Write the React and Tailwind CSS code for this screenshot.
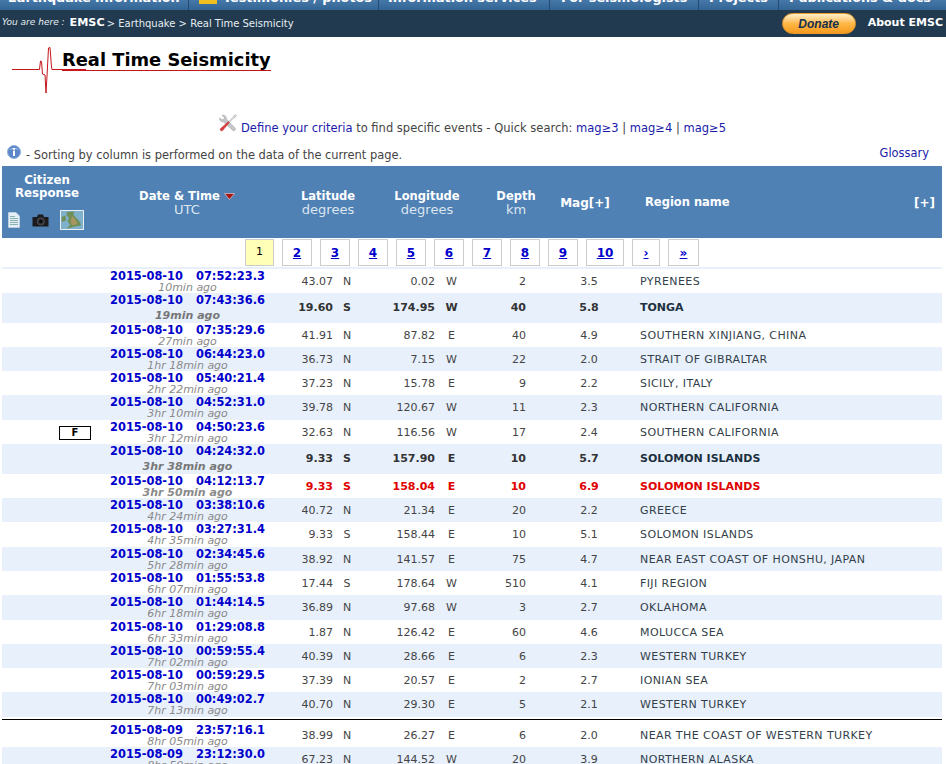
const navItems = [
  { label: 'Earthquake information', w: 'w-[189px]', pl: 'pl-[8px]' },
  { label: 'Testimonies / photos', w: 'w-[190px]', pl: 'pl-[10px]', icon: true },
  { label: 'Information services', w: 'w-[171px]', pl: 'pl-[9px]' },
  { label: 'For seismologists', w: 'w-[149px]', pl: 'pl-[11px]' },
  { label: 'Projects', w: 'w-[80px]', pl: 'pl-[10px]' },
  { label: 'Publications & docs', w: 'w-[160px]', pl: 'pl-[10px]' },
];

const pages = ['2', '3', '4', '5', '6', '7', '8', '9'];

const rowGrid = 'grid grid-cols-[106px_159px_66px_28px_74px_33px_58px_114px_1fr] items-center';

const rows = [
  { date: '2015-08-10', time: '07:52:23.3', ago: '10min ago', lat: '43.07', ns: 'N', lon: '0.02', ew: 'W', depth: '2', mag: '3.5', region: 'PYRENEES', h: 'h-[24px]' },
  { date: '2015-08-10', time: '07:43:36.6', ago: '19min ago', lat: '19.60', ns: 'S', lon: '174.95', ew: 'W', depth: '40', mag: '5.8', region: 'TONGA', h: 'h-[30px]', bold: true, gap: true },
  { date: '2015-08-10', time: '07:35:29.6', ago: '27min ago', lat: '41.91', ns: 'N', lon: '87.82', ew: 'E', depth: '40', mag: '4.9', region: 'SOUTHERN XINJIANG, CHINA', h: 'h-[24px]' },
  { date: '2015-08-10', time: '06:44:23.0', ago: '1hr 18min ago', lat: '36.73', ns: 'N', lon: '7.15', ew: 'W', depth: '22', mag: '2.0', region: 'STRAIT OF GIBRALTAR', h: 'h-[24px]' },
  { date: '2015-08-10', time: '05:40:21.4', ago: '2hr 22min ago', lat: '37.23', ns: 'N', lon: '15.78', ew: 'E', depth: '9', mag: '2.2', region: 'SICILY, ITALY', h: 'h-[24px]' },
  { date: '2015-08-10', time: '04:52:31.0', ago: '3hr 10min ago', lat: '39.78', ns: 'N', lon: '120.67', ew: 'W', depth: '11', mag: '2.3', region: 'NORTHERN CALIFORNIA', h: 'h-[25px]' },
  { date: '2015-08-10', time: '04:50:23.6', ago: '3hr 12min ago', lat: '32.63', ns: 'N', lon: '116.56', ew: 'W', depth: '17', mag: '2.4', region: 'SOUTHERN CALIFORNIA', h: 'h-[24px]', felt: true },
  { date: '2015-08-10', time: '04:24:32.0', ago: '3hr 38min ago', lat: '9.33', ns: 'S', lon: '157.90', ew: 'E', depth: '10', mag: '5.7', region: 'SOLOMON ISLANDS', h: 'h-[30px]', bold: true, gap: true },
  { date: '2015-08-10', time: '04:12:13.7', ago: '3hr 50min ago', lat: '9.33', ns: 'S', lon: '158.04', ew: 'E', depth: '10', mag: '6.9', region: 'SOLOMON ISLANDS', h: 'h-[24px]', bold: true, red: true },
  { date: '2015-08-10', time: '03:38:10.6', ago: '4hr 24min ago', lat: '40.72', ns: 'N', lon: '21.34', ew: 'E', depth: '20', mag: '2.2', region: 'GREECE', h: 'h-[24px]' },
  { date: '2015-08-10', time: '03:27:31.4', ago: '4hr 35min ago', lat: '9.33', ns: 'S', lon: '158.44', ew: 'E', depth: '10', mag: '5.1', region: 'SOLOMON ISLANDS', h: 'h-[25px]' },
  { date: '2015-08-10', time: '02:34:45.6', ago: '5hr 28min ago', lat: '38.92', ns: 'N', lon: '141.57', ew: 'E', depth: '75', mag: '4.7', region: 'NEAR EAST COAST OF HONSHU, JAPAN', h: 'h-[24px]' },
  { date: '2015-08-10', time: '01:55:53.8', ago: '6hr 07min ago', lat: '17.44', ns: 'S', lon: '178.64', ew: 'W', depth: '510', mag: '4.1', region: 'FIJI REGION', h: 'h-[24px]' },
  { date: '2015-08-10', time: '01:44:14.5', ago: '6hr 18min ago', lat: '36.89', ns: 'N', lon: '97.68', ew: 'W', depth: '3', mag: '2.7', region: 'OKLAHOMA', h: 'h-[25px]' },
  { date: '2015-08-10', time: '01:29:08.8', ago: '6hr 33min ago', lat: '1.87', ns: 'N', lon: '126.42', ew: 'E', depth: '60', mag: '4.6', region: 'MOLUCCA SEA', h: 'h-[24px]' },
  { date: '2015-08-10', time: '00:59:55.4', ago: '7hr 02min ago', lat: '40.39', ns: 'N', lon: '28.66', ew: 'E', depth: '6', mag: '2.3', region: 'WESTERN TURKEY', h: 'h-[24px]' },
  { date: '2015-08-10', time: '00:59:29.5', ago: '7hr 03min ago', lat: '37.39', ns: 'N', lon: '20.57', ew: 'E', depth: '2', mag: '2.7', region: 'IONIAN SEA', h: 'h-[24px]' },
  { date: '2015-08-10', time: '00:49:02.7', ago: '7hr 13min ago', lat: '40.70', ns: 'N', lon: '29.30', ew: 'E', depth: '5', mag: '2.1', region: 'WESTERN TURKEY', h: 'h-[25px]' },
  { divider: true },
  { date: '2015-08-09', time: '23:57:16.1', ago: '8hr 05min ago', lat: '38.99', ns: 'N', lon: '26.27', ew: 'E', depth: '6', mag: '2.0', region: 'NEAR THE COAST OF WESTERN TURKEY', h: 'h-[24px]' },
  { date: '2015-08-09', time: '23:12:30.0', ago: '8hr 50min ago', lat: '67.23', ns: 'N', lon: '144.52', ew: 'W', depth: '20', mag: '3.9', region: 'NORTHERN ALASKA', h: 'h-[24px]', shade: true },
];

function SeismoLogo() {
  return (
    <svg width="50" height="47" viewBox="0 0 50 47" className="shrink-0">
      <path d="M0 22.5H27.5L28.5 14L29.5 14.5L30.5 27L33 28L34 46L35 29L36.5 1L38 0.5L39.5 20L40 22.5H50" fill="none" stroke="#c4161c" strokeWidth="1" />
    </svg>
  );
}

function ToolsIcon() {
  return (
    <svg width="18" height="18" viewBox="0 0 18 18" className="shrink-0 mb-[4px]">
      <path d="M3 1.5L5.5 3.5L4.8 5.5L2.8 5.8L0.8 3.8C0.2 6 1.6 8 4.2 7.8L14 16.5C15 17.5 17.4 15.8 16.2 14.2L7.4 5C7.6 2.4 5.6 0.4 3 1.5Z" fill="#c4c7cb" stroke="#9a9da2" strokeWidth="0.5" />
      <path d="M16.8 0.6L17.6 1.4L16.2 3.4L15.2 3.6L9.8 9L9 8.2L14.4 2.8L14.6 1.8Z" fill="#d6d8dc" stroke="#9a9da2" strokeWidth="0.4" />
      <path d="M9.4 7.6L10.4 8.6L3.6 16.6C2.6 17.6 0.6 16.2 1.4 14.8Z" fill="#dc3c3c" stroke="#b02020" strokeWidth="0.4" />
    </svg>
  );
}

function InfoIcon() {
  return (
    <svg width="14" height="14" viewBox="0 0 14 14" className="shrink-0 mb-[3px]">
      <circle cx="7" cy="7" r="6.5" fill="#5b86c8" stroke="#8fb0de" strokeWidth="1" />
      <path d="M2.5 5C3.5 2 10.5 2 11.5 5C9 3.8 5 3.8 2.5 5Z" fill="#a9c5ec" />
      <rect x="6" y="3" width="2" height="1.8" fill="#fff" />
      <rect x="6" y="5.6" width="2" height="5.4" fill="#fff" />
    </svg>
  );
}

function DocIcon() {
  return (
    <svg width="12" height="16" viewBox="0 0 12 16" className="shrink-0">
      <path d="M0.5 0.5H8L11.5 4V15.5H0.5Z" fill="#e4eef7" stroke="#cfdce9" strokeWidth="0.6" />
      <path d="M2 4.5H7M2 6.5H10M2 8.5H10M2 10.5H10M2 12.5H10" stroke="#7fa9a8" strokeWidth="0.9" />
    </svg>
  );
}

function CameraIcon() {
  return (
    <svg width="17" height="13" viewBox="0 0 17 13" className="shrink-0">
      <path d="M0.5 3H5L6 0.5H11L12 3H16.5V12.5H0.5Z" fill="#1b1b1d" />
      <circle cx="8.8" cy="7.4" r="3.6" fill="#2f2f33" stroke="#55555a" strokeWidth="0.8" />
      <circle cx="8.8" cy="7.4" r="1.6" fill="#0b0b0d" />
    </svg>
  );
}

function MapIcon() {
  return (
    <svg width="24" height="20" viewBox="0 0 24 20" className="shrink-0 ml-[-1px]">
      <rect x="0.5" y="0.5" width="23" height="19" fill="#7fb0cc" stroke="#e8eff4" strokeWidth="1" />
      <path d="M7 2L14 1.5L13.5 5L16 7.5L20 12L21 15.5L15 16.5L7 18.5L10 14.5L7.5 11.5L9 8L6.5 5Z" fill="#6f8f58" />
      <path d="M12 6L15.5 9.5L17.5 14L12 15.5L10.5 11Z" fill="#a89560" />
      <path d="M1.5 7L5.5 5.5L6 10.5L2 12Z" fill="#6f8f58" />
    </svg>
  );
}

function SortArrow() {
  return (
    <svg width="11" height="7" viewBox="0 0 11 7" className="inline-block ml-[4px] mb-[1px]">
      <path d="M0.5 0.5H10.5L5.5 6.5Z" fill="#a81515" stroke="#f2dede" strokeWidth="0.6" />
    </svg>
  );
}

function HeaderCol({ title, sub, className }) {
  return (
    <div className={className}>
      <div className="font-bold text-[11.5px] leading-[13px]">{title}</div>
      <div className="text-[#dce6f0] text-[13px] leading-[13px]">{sub}</div>
    </div>
  );
}

function EventRow({ row, shaded }) {
  const textColor = row.red ? 'text-[#e00000]' : row.bold ? 'text-[#333333]' : 'text-[#444444]';
  const regionColor = row.red ? 'text-[#e00000]' : row.bold ? 'text-[#1d3040]' : 'text-[#333f4a] tracking-[0.4px]';
  const weight = row.bold ? 'font-bold' : 'font-normal';

  return (
    <div className={`${rowGrid} ${row.h} pt-[1px] ${shaded ? 'bg-[#e8f0fc]' : 'bg-white'} ${textColor} ${weight} text-[11px]`}>
      <div className="pl-[57px]">
        {row.felt && (
          <div className="w-[32px] h-[14px] border border-black flex items-center justify-center text-black font-bold text-[10px] leading-none">F</div>
        )}
      </div>
      <div className="self-start flex flex-col items-center">
        <div className="text-[#0000cc] font-bold text-[11.4px] leading-[12px] whitespace-nowrap">
          <span>{row.date}</span>
          <span className="ml-[13px]">{row.time}</span>
        </div>
        <div className={`text-[#8a8a8a] italic leading-[12px] ${row.bold ? 'font-bold' : 'font-normal'} ${row.gap ? 'mt-[4px] text-[#777777]' : ''}`}>{row.ago}</div>
      </div>
      <div className="text-right">{row.lat}</div>
      <div className="text-center">{row.ns}</div>
      <div className="text-right">{row.lon}</div>
      <div className="text-center">{row.ew}</div>
      <div className="text-right">{row.depth}</div>
      <div className="text-center pl-[12px]">{row.mag}</div>
      <div className={`${regionColor} whitespace-nowrap`}>{row.region}</div>
    </div>
  );
}

export default function App() {
  let counter = 0;

  return (
    <div className="h-[764px] w-[946px] overflow-hidden bg-white font-['DejaVu_Sans',Verdana,sans-serif] text-[11px] text-[#444444]">
      {/* Main menu, scrolled almost out of view */}
      <div className="flex h-[10px] overflow-hidden bg-gradient-to-b from-[#4577a8] to-[#336594] text-white font-bold text-[12.8px] leading-[13px]">
        {navItems.map(item => (
          <div key={item.label} className={`${item.w} ${item.pl} shrink-0 h-[10px] flex items-end gap-[6px] pb-[6px] border-r border-[#234a70] last:border-r-0 whitespace-nowrap`}>
            {item.icon && <span className="w-[18px] h-[13px] bg-[#f0c020] shrink-0" />}
            <span>{item.label}</span>
          </div>
        ))}
      </div>

      {/* Breadcrumb */}
      <div className="flex items-center h-[27px] pb-[1px] bg-[#213a4f] text-white pl-[2px] pr-[3px]">
        <span className="italic text-[9px] text-[#e6edf2]">You are here :</span>
        <span className="font-bold text-[11.2px] ml-[5px]">EMSC</span>
        <span className="text-[10px] ml-[2px] text-[#e6edf2]">&gt; Earthquake &gt; Real Time Seismicity</span>
        <div className="ml-auto flex items-center gap-[12px] mt-[1px]">
          <div className="w-[74px] h-[21px] rounded-full bg-gradient-to-b from-[#fff0c8] via-[#ffb845] to-[#f59a1c] border border-[#e89a2a] flex items-center justify-center font-['Liberation_Sans',Arial,sans-serif] italic font-bold text-[12px] text-[#14304f]">Donate</div>
          <span className="font-bold text-[11px]">About EMSC</span>
        </div>
      </div>

      {/* Title */}
      <div className="flex h-[73px] pl-[12px] pt-[10px]">
        <SeismoLogo />
        <h1 className="relative self-start text-[17.85px] leading-[21px] pt-[2px] font-bold text-black border-b border-[#c4161c] h-[24px] whitespace-nowrap">
          Real Time Seismicity
          <span className="absolute left-0 bottom-0 w-[24px] h-px bg-[#c4161c]" />
        </h1>
      </div>

      {/* Search links */}
      <div className="flex items-end h-[26px] pl-[219px] text-[11.5px]">
        <ToolsIcon />
        <p className="ml-[4px] leading-[14px] mb-[1px]">
          <span className="text-[#1a1aaa]">Define your criteria</span> to find specific events - Quick search:{' '}
          <span className="text-[#1a1aaa]">mag≥3</span> | <span className="text-[#1a1aaa]">mag≥4</span> | <span className="text-[#1a1aaa]">mag≥5</span>
        </p>
      </div>
      <div className="flex items-end justify-between h-[30px] pl-[7px] pr-[17px] pb-[4px] text-[11.45px]">
        <div className="flex items-end gap-[5px]">
          <InfoIcon />
          <span className="leading-[14px]">- Sorting by column is performed on the data of the current page.</span>
        </div>
        <span className="text-[#1a1aaa]">Glossary</span>
      </div>

      {/* Table */}
      <div className="mx-[2px] w-[940px]">
        <div className="grid grid-cols-[90px_190px_92px_106px_72px_66px_1fr_auto] items-center h-[72px] pt-[2px] bg-[#4f81b5] text-white text-center">
          <div className="self-start flex flex-col items-center pt-[6px]">
            <div className="font-bold text-[11.8px] leading-[13px]">Citizen</div>
            <div className="font-bold text-[11.8px] leading-[13px]">Response</div>
            <div className="flex items-center gap-[12px] mt-[10px] ml-[-3px] w-[76px]">
              <DocIcon />
              <CameraIcon />
              <MapIcon />
            </div>
          </div>
          <div>
            <div className="font-bold text-[11.6px] leading-[13px]">Date &amp; Time<SortArrow /></div>
            <div className="text-[#dce6f0] text-[13px] leading-[13px]">UTC</div>
          </div>
          <HeaderCol title="Latitude" sub="degrees" />
          <HeaderCol title="Longitude" sub="degrees" />
          <HeaderCol title="Depth" sub="km" />
          <div className="font-bold text-[12px]">Mag[+]</div>
          <div className="font-bold text-[11.5px] text-left pl-[27px]">Region name</div>
          <div className="font-bold text-[12px] pr-[7px]">[+]</div>
        </div>

        {/* Pagination */}
        <div className="flex items-start h-[31px] pl-[243px] pt-[1px] gap-[8px] border-b-2 border-[#e8f0fc] text-[12px]">
          <span className="w-[29px] h-[27px] flex items-center justify-center bg-[#ffffb8] border border-[#cccccc] text-black text-[11px]">1</span>
          {pages.map(p => (
            <span key={p} className="w-[30px] h-[27px] flex items-center justify-center border border-[#cccccc] text-[#0000cc] font-bold underline">{p}</span>
          ))}
          <span className="w-[38px] h-[27px] flex items-center justify-center border border-[#cccccc] text-[#0000cc] font-bold underline">10</span>
          <span className="w-[28px] h-[27px] flex items-center justify-center border border-[#cccccc] text-[#0000cc] font-bold underline">›</span>
          <span className="w-[31px] h-[27px] flex items-center justify-center border border-[#cccccc] text-[#0000cc] font-bold underline">»</span>
        </div>

        {/* Rows */}
        {rows.map((row, i) => {
          if (row.divider) return <div key={i} className="mt-[2px] mb-[3px] h-px bg-black" />;
          counter += 1;
          return <EventRow key={i} row={row} shaded={counter % 2 === 0 || row.shade} />;
        })}
      </div>
    </div>
  );
}
